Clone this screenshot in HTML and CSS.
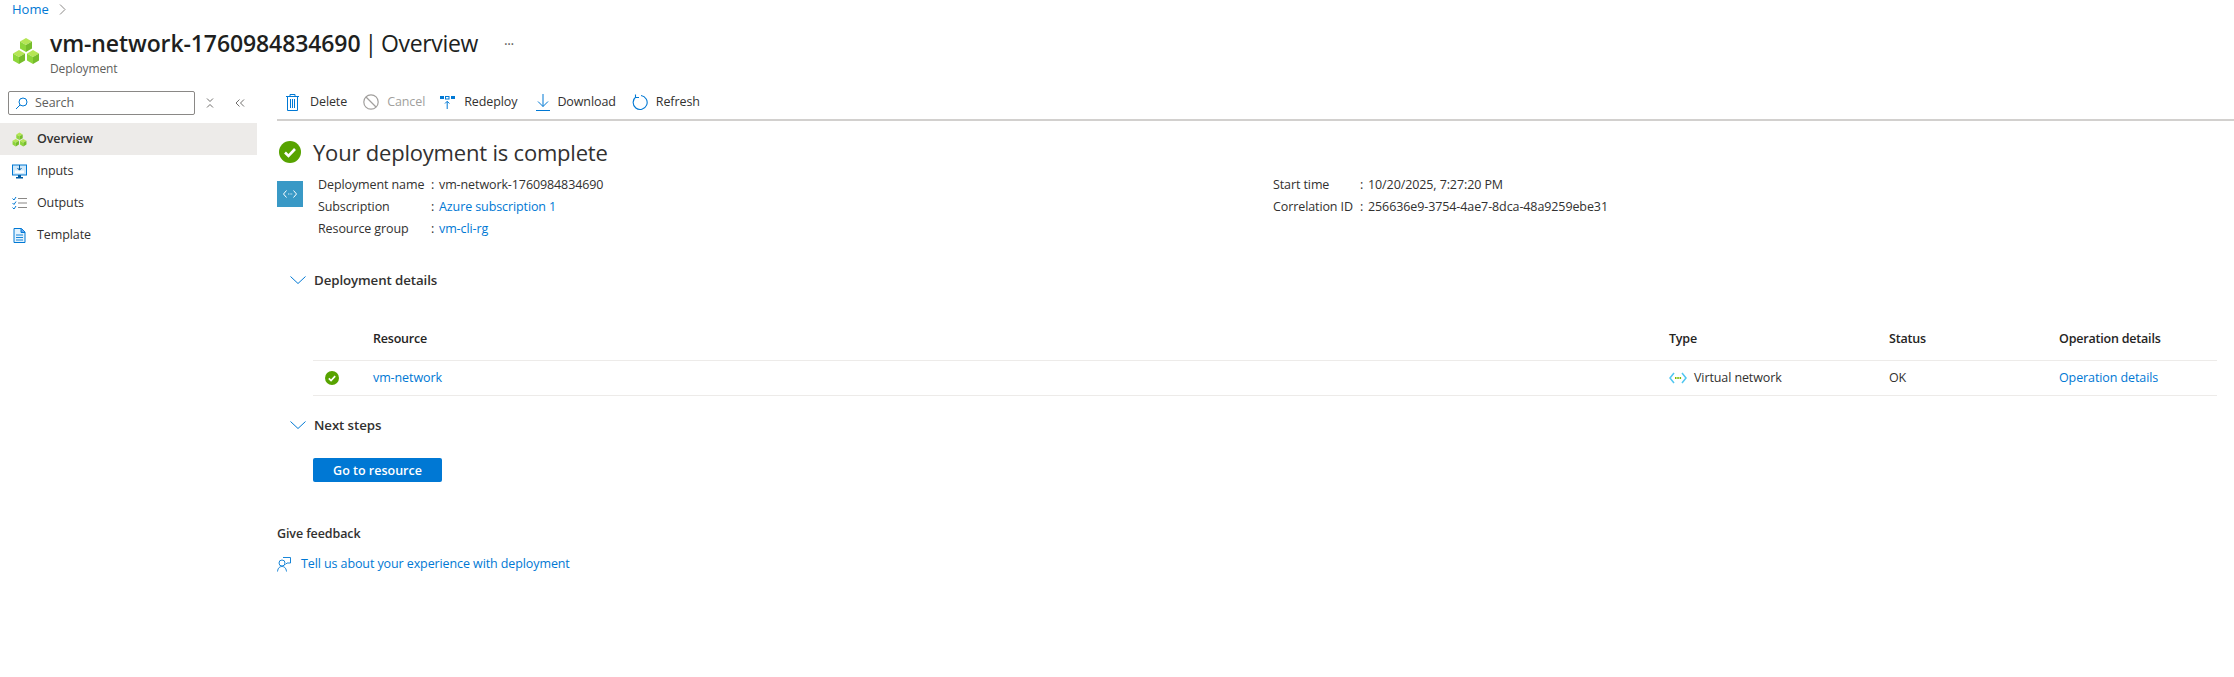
FILE: index.html
```html
<!DOCTYPE html>
<html lang="en">
<head>
    <meta charset="UTF-8">
    <title>vm-network-1760984834690 | Overview</title>
    <link rel="stylesheet" href="styles.css">
</head>
<body>
    <svg class="defs" width="0" height="0">
        <symbol id="cubes" viewBox="0 0 28 28">
            <polygon points="14,1 20,4.5 14,8 8,4.5" fill="#b5e655"/>
            <polygon points="8,4.5 14,8 14,15 8,11.5" fill="#8ed63a"/>
            <polygon points="20,4.5 14,8 14,15 20,11.5" fill="#76bd2b"/>
            <polygon points="7,13 13,16.5 7,20 1,16.5" fill="#b5e655"/>
            <polygon points="1,16.5 7,20 7,27 1,23.5" fill="#8ed63a"/>
            <polygon points="13,16.5 7,20 7,27 13,23.5" fill="#76bd2b"/>
            <polygon points="21,13 27,16.5 21,20 15,16.5" fill="#b5e655"/>
            <polygon points="15,16.5 21,20 21,27 15,23.5" fill="#8ed63a"/>
            <polygon points="27,16.5 21,20 21,27 27,23.5" fill="#76bd2b"/>
        </symbol>
        <symbol id="check" viewBox="0 0 22 22">
            <circle cx="11" cy="11" r="11" fill="#57a300"/>
            <path d="M6 11.5l3.5 3.5L16 8" fill="none" stroke="#fff" stroke-width="2.6"/>
        </symbol>
        <symbol id="chevron" viewBox="0 0 16 8">
            <path d="M.5 .5L8 7.5L15.5 .5" fill="none" stroke="#0078d4" stroke-width="1"/>
        </symbol>
    </svg>

    <header class="page-header">
        <nav class="breadcrumb">
            <a href="#" class="link">Home</a>
            <svg class="crumb-sep" width="7" height="11" viewBox="0 0 7 11"><path d="M1 .5L6 5.5L1 10.5" fill="none" stroke="#8a8886"/></svg>
        </nav>
        <div class="title-row">
            <svg class="title-icon" width="28" height="28"><use href="#cubes"/></svg>
            <div>
                <h1 class="title"><b>vm-network-1760984834690</b> | Overview<span class="more">&middot;&middot;&middot;</span></h1>
                <div class="subtitle">Deployment</div>
            </div>
        </div>
    </header>

    <div class="layout">
        <aside class="sidebar">
            <div class="search-row">
                <div class="search-box">
                    <svg width="13" height="13" viewBox="0 0 13 13"><circle cx="8" cy="5" r="4" fill="none" stroke="#0078d4"/><path d="M5 8L1 12" stroke="#0078d4"/></svg>
                    <span>Search</span>
                </div>
                <svg class="search-tool" width="8" height="10" viewBox="0 0 8 10"><path d="M1 .5L4 3.5L7 .5M1 9.5L4 6.5L7 9.5" fill="none" stroke="#605e5c" stroke-width=".9"/></svg>
                <svg class="search-tool tool-collapse" width="10" height="8" viewBox="0 0 10 8"><path d="M4.5 .5L1 4L4.5 7.5M9 .5L5.5 4L9 7.5" fill="none" stroke="#605e5c" stroke-width=".9"/></svg>
            </div>
            <ul class="menu">
                <li class="menu-item active">
                    <svg width="15" height="15"><use href="#cubes"/></svg>Overview
                </li>
                <li class="menu-item">
                    <svg width="15" height="15" viewBox="0 0 15 15">
                        <rect x=".5" y="1" width="14" height="10" fill="#cfe8fa" stroke="#0078d4"/>
                        <rect x="3" y="6.5" width="9" height="2.5" fill="#fff"/>
                        <path d="M7.5 1v5M5.5 4l2 2.200l2-2.200" fill="none" stroke="#005ba1"/>
                        <path d="M6 11h3v2h2v1.500H4V13h2z" fill="#005ba1"/>
                    </svg>Inputs
                </li>
                <li class="menu-item">
                    <svg width="15" height="15" viewBox="0 0 15 15">
                        <path d="M.5 2.500l1.500 1.500l2-3M.5 7l1.500 1.500l2-3M.5 11.500l1.500 1.500l2-3" fill="none" stroke="#0078d4"/>
                        <path d="M6 2.500h9M6 7h9M6 11.500h9" stroke="#8a8886" stroke-width="1.200"/>
                    </svg>Outputs
                </li>
                <li class="menu-item">
                    <svg width="15" height="15" viewBox="0 0 15 15">
                        <path d="M2 .5h7.500L13 4v10.500H2z" fill="#e3f2fd" stroke="#0078d4"/>
                        <path d="M9 .5V4.500h4" fill="#5ea0ef" stroke="#0078d4"/>
                        <path d="M4 7h7M4 9.500h7M4 12h7" stroke="#0078d4" stroke-width=".9"/>
                    </svg>Template
                </li>
            </ul>
        </aside>

        <main class="main">
            <div class="toolbar">
                <span class="tool tool-delete">
                    <svg width="13" height="17" viewBox="0 0 13 17" fill="none" stroke="#0078d4">
                        <path d="M0 2.500h13M4 2.500V.5h5v2M1.500 2.500v14h10v-14M4.500 5v9M6.500 5v9M8.500 5v9"/>
                    </svg>Delete
                </span>
                <span class="tool tool-cancel disabled">
                    <svg width="16" height="16" viewBox="0 0 16 16" fill="none" stroke="#a19f9d" stroke-width="1.200">
                        <circle cx="8" cy="8" r="7.200"/><path d="M3 3l10 10"/>
                    </svg>Cancel
                </span>
                <span class="tool tool-redeploy">
                    <svg width="15" height="14" viewBox="0 0 15 14">
                        <rect x="0" y="1" width="4" height="3" fill="#0078d4"/>
                        <rect x="5.500" y="1.500" width="3.500" height="2.500" fill="none" stroke="#0078d4"/>
                        <rect x="11" y="1" width="4" height="3" fill="#0078d4"/>
                        <path d="M7.200 14V6.500M5 8.500l2.200-2.200l2.200 2.200" fill="none" stroke="#0078d4"/>
                    </svg>Redeploy
                </span>
                <span class="tool tool-download">
                    <svg width="16" height="17" viewBox="0 0 16 17" fill="none" stroke="#0078d4">
                        <path d="M8 0v12.500M3 7.500l5 5l5-5M1 16.500h14"/>
                    </svg>Download
                </span>
                <span class="tool tool-refresh">
                    <svg width="16" height="17" viewBox="0 0 16 17" fill="none" stroke="#0078d4" stroke-width="1.100">
                        <path d="M9 1.500A7 7 0 1 1 4 2.800M3.500 0.500V3.500H7"/>
                    </svg>Refresh
                </span>
            </div>

            <h2 class="status-heading">
                <svg width="22" height="22"><use href="#check"/></svg>Your deployment is complete
            </h2>

            <div class="summary">
                <div class="vnet-tile">
                    <svg width="14" height="8" viewBox="0 0 14 8" fill="none" stroke="#fff">
                        <path d="M3.500 .5L.5 4l3 3.500M10.500 .5l3 3.500l-3 3.500M5 4h.8M6.700 4h.8M8.400 4h.8"/>
                    </svg>
                </div>
                <dl class="facts facts-left">
                    <dt>Deployment name</dt><dd>vm-network-1760984834690</dd>
                    <dt>Subscription</dt><dd><a href="#" class="link">Azure subscription 1</a></dd>
                    <dt>Resource group</dt><dd><a href="#" class="link">vm-cli-rg</a></dd>
                </dl>
                <dl class="facts facts-right">
                    <dt>Start time</dt><dd>10/20/2025, 7:27:20 PM</dd>
                    <dt>Correlation ID</dt><dd>256636e9-3754-4ae7-8dca-48a9259ebe31</dd>
                </dl>
            </div>

            <h3 class="section-head section-details">
                <svg width="16" height="8"><use href="#chevron"/></svg>Deployment details
            </h3>

            <div class="table">
                <div class="table-row table-head">
                    <span></span><span>Resource</span><span>Type</span><span>Status</span><span>Operation details</span>
                </div>
                <div class="table-row">
                    <span class="status-cell"><svg width="14" height="14"><use href="#check"/></svg></span>
                    <span><a href="#" class="link">vm-network</a></span>
                    <span class="type-cell">
                        <svg width="18" height="12" viewBox="0 0 18 12" fill="none">
                            <path d="M5 1L1 6l4 5M13 1l4 5l-4 5" stroke="#50c7f0" stroke-width="1.500"/>
                            <path d="M6 6h1.500M8.300 6h1.500M10.600 6h1.500" stroke="#7fba00" stroke-width="2"/>
                        </svg>Virtual network
                    </span>
                    <span>OK</span>
                    <span><a href="#" class="link">Operation details</a></span>
                </div>
            </div>

            <h3 class="section-head section-next">
                <svg width="16" height="8"><use href="#chevron"/></svg>Next steps
            </h3>

            <button class="primary-button">Go to resource</button>

            <div class="feedback-title">Give feedback</div>
            <a href="#" class="link feedback-link">
                <svg width="14" height="15" viewBox="0 0 14 15" fill="none" stroke="#0078d4" stroke-width=".9">
                    <circle cx="5" cy="6" r="3"/>
                    <path d="M.5 14.500C1 10.500 3 9.500 5 9.500s4 1 4.500 5M6 .5h7.500v5.500H10l-1.500 1.500"/>
                </svg>Tell us about your experience with deployment
            </a>
        </main>
    </div>
</body>
</html>
```

FILE: styles.css
```css
* {
    margin: 0;
    padding: 0;
    box-sizing: border-box;
}

body {
    font-family: "Open Sans", "Noto Sans", sans-serif;
    font-size: 12.5px;
    line-height: 20px;
    letter-spacing: -0.1px;
    color: #323130;
    background: #fff;
    overflow: hidden;
}

.defs {
    position: absolute;
}

.link {
    color: #0078d4;
    text-decoration: none;
}

svg {
    flex: none;
}

/* page header */

.page-header {
    height: 85px;
}

.breadcrumb {
    display: flex;
    align-items: center;
    gap: 10px;
    height: 18px;
    padding-left: 12px;
    font-size: 13px;
    letter-spacing: 0;
}

.title-row {
    display: flex;
    padding: 9px 0 0 12px;
    gap: 10px;
}

.title-icon {
    margin-top: 10px;
}

.title {
    font-size: 23px;
    font-weight: 400;
    line-height: 32px;
    letter-spacing: -0.35px;
    word-spacing: -1.5px;
    color: #201f1e;
}

.title b {
    font-weight: 600;
    letter-spacing: -0.1px;
}

.more {
    margin-left: 26px;
    font-size: 14px;
    vertical-align: 3px;
    color: #605e5c;
}

.subtitle {
    line-height: 18px;
    font-size: 12px;
    color: #605e5c;
}

/* sidebar */

.layout {
    display: flex;
}

.sidebar {
    width: 257px;
    flex: none;
}

.search-row {
    display: flex;
    align-items: center;
    height: 24px;
    margin-top: 6px;
    padding-left: 8px;
}

.search-box {
    display: flex;
    align-items: center;
    gap: 7px;
    width: 187px;
    height: 24px;
    padding-left: 6px;
    border: 1px solid #8a8886;
    border-radius: 2px;
    color: #605e5c;
}

.search-tool {
    margin-left: 11px;
}

.tool-collapse {
    margin-left: 21px;
}

.menu {
    list-style: none;
    margin-top: 8px;
}

.menu-item {
    display: flex;
    align-items: center;
    gap: 10px;
    height: 32px;
    padding-left: 12px;
}

.menu-item.active {
    background: #edebe9;
    font-weight: 600;
}

/* main column */

.main {
    flex: 1;
    padding-left: 20px;
}

.toolbar {
    display: flex;
    align-items: center;
    height: 36px;
    border-bottom: 2px solid #d2d0ce;
}

.tool {
    display: flex;
    align-items: center;
}

.tool-delete {
    margin-left: 9px;
    gap: 11px;
}

.tool-cancel {
    margin-left: 16px;
    gap: 8px;
}

.tool-redeploy {
    margin-left: 15px;
    gap: 9px;
}

.tool-download {
    margin-left: 18px;
    gap: 6px;
}

.tool-refresh {
    margin-left: 16px;
    gap: 8px;
}

.disabled {
    color: #a19f9d;
}

.status-heading {
    display: flex;
    align-items: center;
    gap: 12px;
    height: 30px;
    margin: 16px 0 0 2px;
    font-size: 22px;
    font-weight: 400;
    letter-spacing: -0.2px;
}

.summary {
    display: flex;
    margin-top: 7px;
}

.vnet-tile {
    display: flex;
    align-items: center;
    justify-content: center;
    width: 26px;
    height: 26px;
    margin-top: 7px;
    background: #3999c6;
}

.facts {
    display: grid;
    grid-auto-rows: 22px;
    align-items: center;
}

.facts dd::before {
    content: ":";
    display: inline-block;
    width: 8px;
}

.facts-left {
    grid-template-columns: 113px 1fr;
    width: 955px;
    margin-left: 15px;
}

.facts-right {
    grid-template-columns: 87px 1fr;
}

.section-head {
    display: flex;
    align-items: center;
    gap: 8px;
    height: 20px;
    padding-left: 13px;
    font-size: 13.3px;
    font-weight: 600;
}

.section-details {
    margin-top: 30px;
}

.section-next {
    margin-top: 19px;
}

/* resource table */

.table {
    width: 1904px;
    margin: 28px 0 0 36px;
}

.table-row {
    display: grid;
    grid-template-columns: 60px 1296px 220px 170px 158px;
    align-items: center;
    height: 35px;
    border-bottom: 1px solid #edebe9;
}

.table-head {
    height: 43px;
    font-weight: 600;
    letter-spacing: -0.2px;
    color: #252423;
}

.status-cell {
    display: flex;
    padding-left: 12px;
}

.type-cell {
    display: flex;
    align-items: center;
    gap: 7px;
}

.primary-button {
    display: block;
    width: 129px;
    height: 24px;
    margin: 23px 0 0 36px;
    border: none;
    border-radius: 2px;
    background: #0078d4;
    color: #fff;
    font: 600 12.5px "Open Sans", sans-serif;
}

.feedback-title {
    margin-top: 42px;
    font-weight: 600;
}

.feedback-link {
    display: flex;
    align-items: center;
    gap: 10px;
    margin-top: 10px;
}
```
